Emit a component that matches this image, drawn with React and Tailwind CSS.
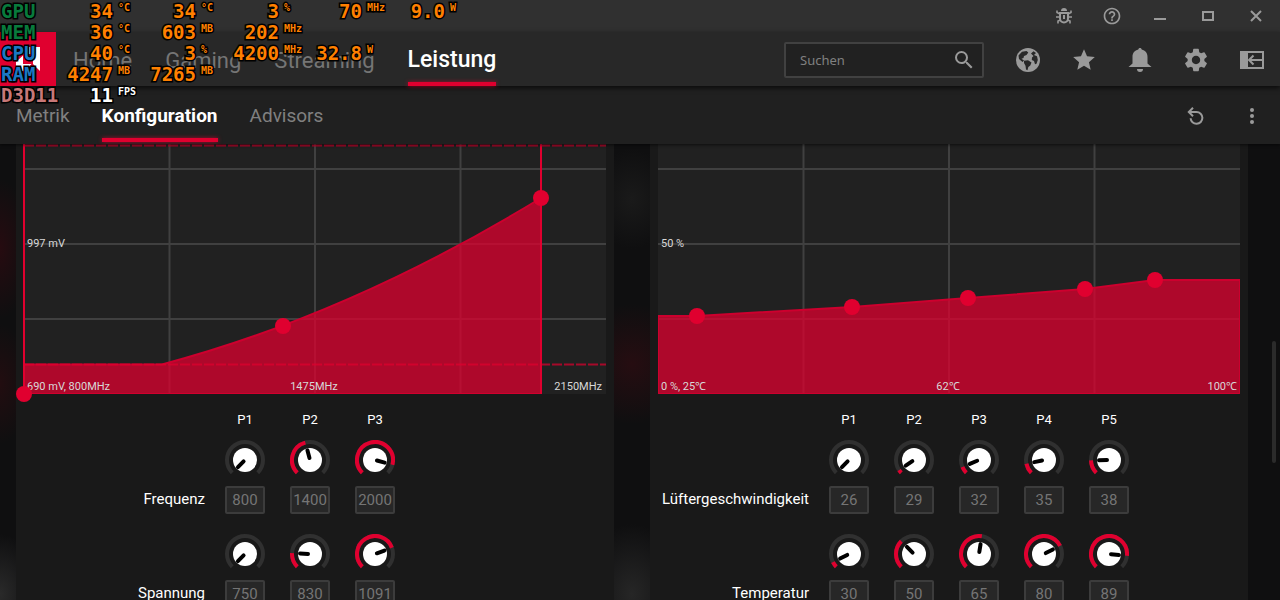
import React, { useState } from 'react';
import clsx from 'clsx';
import { MdHelpOutline, MdSearch, MdSettings, MdStar } from 'react-icons/md';

const mainTabs = ['Home', 'Gaming', 'Streaming', 'Leistung'];
const subTabs = ['Metrik', 'Konfiguration', 'Advisors'];

const overlayRows = [
  { name: 'GPU', color: 'text-[#087a3c]', cells: [['34', '°C'], ['34', '°C'], ['3', '%'], ['70', 'MHz'], ['9.0', 'W']] },
  { name: 'MEM', color: 'text-[#087a3c]', cells: [['36', '°C'], ['603', 'MB'], ['202', 'MHz']] },
  { name: 'CPU', color: 'text-[#1b78c4]', cells: [['40', '°C'], ['3', '%'], ['4200', 'MHz'], ['32.8', 'W']] },
  { name: 'RAM', color: 'text-[#1b78c4]', cells: [['4247', 'MB'], ['7265', 'MB']] },
  { name: 'D3D11', color: 'text-[#c87878]', white: true, cells: [['11', 'FPS']] },
];

const gpuRows = [
  { label: 'Frequenz', min: 800, max: 2150, values: [800, 1400, 2000] },
  { label: 'Spannung', min: 750, max: 1200, values: [750, 830, 1091] },
];

const fanRows = [
  { label: 'Lüftergeschwindigkeit', min: 26, max: 100, values: [26, 29, 32, 35, 38] },
  { label: 'Temperatur', min: 25, max: 100, values: [30, 50, 65, 80, 89] },
];

function BugIcon() {
  return (
    <svg width="16" height="16" viewBox="0 0 16 16" fill="none" stroke="currentColor" strokeWidth="2">
      <path d="M5 3a3 3 0 0 1 6 0z" fill="currentColor" stroke="none" />
      <path d="M4 5h8v5.500a4 4 0 0 1-8 0z" />
      <path d="M8 7v4" strokeWidth="2" />
      <path d="M4 6 1 4.500V2.500M12 6l3-1.500V2.500M4 9H0M12 9h4M4.500 12 2 13v2.500M11.500 12l2.500 1v2.500" strokeWidth="1.600" />
    </svg>
  );
}

function GlobeIcon() {
  return (
    <svg width="24" height="24" viewBox="0 0 24 24">
      <circle cx="12" cy="12" r="12" fill="currentColor" />
      <g fill="#282828">
        <path d="M2.500 7.500 6 3.800 10.500 3l1.800 1.500L10.500 7 8 8l-.5 2-2 .8 2.500 1.700L6.500 14 3 11z" />
        <path d="M8 12.800l4-.6 3.500 2.300-1.200 3-2 1.500-.8 3.200-1.500-.6-.5-3.800L8 15z" />
        <path d="M15 5.500l2.500-2.300L20 5l-2 2 3 1.200.8 3.800-1.300 3.800-1.500.4-1-3.200-2.200-1L16 9.500l1.500-1.500z" />
      </g>
    </svg>
  );
}

function BellIcon() {
  return (
    <svg width="24" height="24" viewBox="0 0 24 24" fill="currentColor">
      <path d="M12 0c1 0 1.600.6 1.700 1.600C17.300 2.400 19.500 5.200 19.500 9v6.500L23.500 19H.5l4-3.500V9c0-3.800 2.200-6.600 5.800-7.400C10.400.6 11 0 12 0z" />
      <path d="M9 21h6a3 3 0 0 1-6 0z" />
    </svg>
  );
}

function SidebarIcon() {
  return (
    <svg width="24" height="18" viewBox="0 0 24 18" fill="none" stroke="currentColor" strokeWidth="2">
      <path d="M0 0h8v18H0z" fill="currentColor" stroke="none" />
      <path d="M7 1h16v16H7M9.500 9H22M13.500 4.500 9 9l4.500 4.500" />
    </svg>
  );
}

function ResetIcon() {
  return (
    <svg width="18" height="18" viewBox="0 0 18 18" fill="none" stroke="currentColor" strokeWidth="2">
      <path d="M2 5h7.500a5.900 5.900 0 1 1-5.900 6.200" />
      <path d="M6 .8 1.800 5 6 9.200" />
    </svg>
  );
}

function Overlay() {
  return (
    <div className="pointer-events-none absolute left-0 top-0 z-50 pl-px pt-px font-['DejaVu_Sans_Mono',monospace] font-bold [-webkit-text-stroke:3px_#000] [paint-order:stroke_fill]">
      {overlayRows.map((row) => (
        <div key={row.name} className="flex h-[21px] items-center whitespace-nowrap text-[19px] leading-[21px]">
          <span className={clsx('w-[54px]', row.color)}>{row.name}</span>
          {row.cells.map(([value, unit], i) => (
            <span key={i} className={clsx('flex', row.white ? 'text-white' : 'text-[#ff8000]')}>
              <span className="flex w-[58px] justify-end">{value}</span>
              <span className="w-[25px] pl-[5px] text-[10px] leading-[14px]">{unit}</span>
            </span>
          ))}
        </div>
      ))}
    </div>
  );
}

function TitleBar() {
  return (
    <div className="flex h-8 justify-end bg-[#303030] text-[#9a9a9a]">
      <button aria-label="Fehler melden" className="flex w-12 items-center justify-center hover:text-white">
        <BugIcon />
      </button>
      <button aria-label="Hilfe" className="flex w-12 items-center justify-center hover:text-white">
        <MdHelpOutline size={20} />
      </button>
      <button aria-label="Minimieren" className="flex w-12 items-center justify-center hover:text-white">
        <svg width="12" height="10" stroke="currentColor" strokeWidth="2"><path d="M0 8h12" /></svg>
      </button>
      <button aria-label="Maximieren" className="flex w-12 items-center justify-center hover:text-white">
        <svg width="12" height="10" fill="none" stroke="currentColor" strokeWidth="2"><path d="M1 1h10v8H1z" /></svg>
      </button>
      <button aria-label="Schließen" className="flex w-12 items-center justify-center hover:text-white">
        <svg width="12" height="12" stroke="currentColor" strokeWidth="2"><path d="m1 1 10 10M11 1 1 11" /></svg>
      </button>
    </div>
  );
}

function NavBar() {
  const [active, setActive] = useState('Leistung');

  return (
    <header className="relative z-20 flex h-[54px] bg-[#282828] shadow-[0_2px_5px_rgba(0,0,0,0.7)]">
      <a href="#home" aria-label="Startseite" className="flex w-14 items-center justify-center bg-[#e0002f] text-white">
        <svg width="24" height="24" viewBox="0 0 24 24" fill="currentColor">
          <path d="M0 0h24v24l-7-7V7H7z" />
          <path d="M7 8.500v8.500h8.500L9 24H0v-9z" />
        </svg>
      </a>
      <nav className="ml-[17px] flex gap-[33px]">
        {mainTabs.map((tab) => (
          <a
            key={tab}
            href={'#' + tab.toLowerCase()}
            onClick={() => setActive(tab)}
            className={clsx('relative flex items-center pt-0.5', tab === active ? 'text-[23px] font-medium text-white' : 'text-[22px] text-[#757575]')}
          >
            {tab}
            {tab === active && <span className="absolute inset-x-0 bottom-0 h-1 bg-[#e0002f] shadow-[0_0_4px_rgba(224,0,47,0.7)]" />}
          </a>
        ))}
      </nav>
      <div className="ml-auto flex items-center pt-0.5 text-[#9a9a9a]">
        <label className="mr-4 flex h-9 w-[200px] items-center rounded-xs border-2 border-[#414141] bg-[#212121] pl-[14px] pr-[6px]">
          <input
            type="text"
            aria-label="Suchen"
            placeholder="Suchen"
            className="min-w-0 flex-1 bg-transparent pt-px font-['Noto_Sans',sans-serif] text-[13px] outline-none placeholder:text-[#808080]"
          />
          <MdSearch size={24} />
        </label>
        <button aria-label="Web" className="flex h-full w-14 items-center justify-center hover:text-white">
          <GlobeIcon />
        </button>
        <button aria-label="Favoriten" className="flex h-full w-14 items-center justify-center hover:text-white">
          <MdStar size={26} />
        </button>
        <button aria-label="Benachrichtigungen" className="flex h-full w-14 items-center justify-center hover:text-white">
          <BellIcon />
        </button>
        <button aria-label="Einstellungen" className="flex h-full w-14 items-center justify-center hover:text-white">
          <MdSettings size={28} />
        </button>
        <button aria-label="Seitenleiste" className="flex h-full w-14 items-center justify-center hover:text-white">
          <SidebarIcon />
        </button>
      </div>
    </header>
  );
}

function SubNav() {
  const [active, setActive] = useState('Konfiguration');

  return (
    <div className="relative z-10 flex h-[58px] bg-[#202020] shadow-[0_1px_3px_rgba(0,0,0,0.6)]">
      <nav className="ml-4 flex gap-8 text-[19px]">
        {subTabs.map((tab) => (
          <a
            key={tab}
            href={'#' + tab.toLowerCase()}
            onClick={() => setActive(tab)}
            className={clsx('relative flex items-center pt-0.5', tab === active ? 'font-bold text-white' : 'text-[#808080]')}
          >
            {tab}
            {tab === active && <span className="absolute inset-x-0 bottom-0.5 h-1 bg-[#e0002f] shadow-[0_0_4px_rgba(224,0,47,0.7)]" />}
          </a>
        ))}
      </nav>
      <div className="ml-auto flex pt-0.5 text-[#9a9a9a]">
        <button aria-label="Zurücksetzen" className="flex w-14 items-center justify-center hover:text-white">
          <ResetIcon />
        </button>
        <button aria-label="Mehr" className="flex w-14 items-center justify-center hover:text-white">
          <svg width="4" height="18" viewBox="0 0 4 18" fill="currentColor">
            <circle cx="2" cy="3" r="2" />
            <circle cx="2" cy="9" r="2" />
            <circle cx="2" cy="15" r="2" />
          </svg>
        </button>
      </div>
    </div>
  );
}

function Grid() {
  return (
    <>
      <rect width="582" height="250" fill="#212121" />
      <path d="M145.500 0v250M291 0v250M436.500 0v250M0 25h582M0 100h582M0 175h582" stroke="#404040" strokeWidth="2" />
    </>
  );
}

function VoltageChart() {
  return (
    <svg viewBox="0 0 582 250" className="block h-auto w-full overflow-visible">
      <Grid />
      <path d="M0 220.500H138Q327.500 170 517 54V250H0z" fill="#e0002f" fillOpacity="0.74" />
      <path d="M0 220.500H138Q327.500 170 517 54" fill="none" stroke="#cc002e" strokeWidth="2" />
      <path d="M0 1.500H582M0 220.500H582" stroke="#e0002f" strokeOpacity="0.7" strokeWidth="2" strokeDasharray="10 2" />
      <path d="M0 249.500H517" stroke="#d0002e" />
      <path d="M0 0V250M517 0V250" stroke="#e0002f" strokeWidth="2" />
      <g fill="#d8d8d8" fontSize="11">
        <text x="3" y="103">997 mV</text>
        <text x="3" y="246">690 mV, 800MHz</text>
        <text x="290" y="246" textAnchor="middle">1475MHz</text>
        <text x="578" y="246" textAnchor="end">2150MHz</text>
      </g>
      <g fill="#e0002f">
        <circle cx="0" cy="250" r="8" />
        <circle cx="259" cy="182" r="8" />
        <circle cx="517" cy="54" r="8" />
      </g>
    </svg>
  );
}

function FanChart() {
  const points = [[39, 172], [194, 163], [310, 154], [427, 145], [497, 136]];
  const line = 'M0 172L' + points.map((p) => p.join(' ')).join('L') + 'H582';

  return (
    <svg viewBox="0 0 582 250" className="block h-auto w-full overflow-visible">
      <Grid />
      <path d={line + 'V250H0z'} fill="#e0002f" fillOpacity="0.74" />
      <path d={line} fill="none" stroke="#cc002e" strokeWidth="2" />
      <path d="M0.500 172V249.500H581.500V136" fill="none" stroke="#cc002e" />
      <g fill="#d8d8d8" fontSize="11">
        <text x="3" y="103">50 %</text>
        <text x="3" y="246">0 %, 25℃</text>
        <text x="290" y="246" textAnchor="middle">62℃</text>
        <text x="579" y="246" textAnchor="end">100℃</text>
      </g>
      {points.map(([x, y]) => (
        <circle key={x} cx={x} cy={y} r="8" fill="#e0002f" />
      ))}
    </svg>
  );
}

// the dial sweeps 270 degrees, starting bottom left
function polar(frac, r) {
  const a = ((frac * 270 - 225) * Math.PI) / 180;
  return [20 + r * Math.cos(a), 20 + r * Math.sin(a)];
}

function arc(frac) {
  const [x0, y0] = polar(0, 18);
  const [x1, y1] = polar(frac, 18);
  return `M${x0} ${y0}A18 18 0 ${frac > 2 / 3 ? 1 : 0} 1 ${x1} ${y1}`;
}

function Knob({ label, min, max, value, onChange }) {
  const frac = (value - min) / (max - min);
  const [hx, hy] = polar(frac, 2);
  const [tx, ty] = polar(frac, 10);

  return (
    <div className="relative size-10">
      <svg viewBox="0 0 40 40" className="size-10" fill="none" strokeWidth="4">
        <path d={arc(1)} stroke="#303030" />
        {frac > 0 && <path d={arc(frac)} stroke="#e0002f" />}
        <circle cx="20" cy="20" r="12" fill="#fff" />
        <path d={`M${hx} ${hy}L${tx} ${ty}`} stroke="#000" strokeLinecap="round" />
      </svg>
      <input
        type="range"
        aria-label={label}
        min={min}
        max={max}
        value={value}
        onChange={(e) => onChange(Number(e.target.value))}
        className="absolute inset-0 size-full cursor-pointer opacity-0"
      />
    </div>
  );
}

function ControlRow({ row, labelClass }) {
  const [values, setValues] = useState(row.values);
  const update = (i, v) => setValues(values.map((old, j) => (j === i ? v : old)));

  return (
    <div className="flex items-end gap-5">
      <label htmlFor={row.label + '-0'} className={clsx('shrink-0 whitespace-nowrap pb-[3px] text-right leading-6', labelClass)}>
        {row.label}
      </label>
      <div className="flex gap-[25px]">
        {values.map((value, i) => (
          <div key={i} className="flex flex-col gap-1.5">
            <Knob label={`${row.label} Regler P${i + 1}`} min={row.min} max={row.max} value={value} onChange={(v) => update(i, v)} />
            <input
              id={row.label + '-' + i}
              type="text"
              aria-label={i > 0 ? `${row.label} P${i + 1}` : undefined}
              value={value}
              onChange={(e) => update(i, Number(e.target.value) || 0)}
              className="h-7 w-10 rounded-xs border-2 border-[#3c3c3c] bg-[#272727] text-center text-[#757575] outline-none"
            />
          </div>
        ))}
      </div>
    </div>
  );
}

function Panel({ chart, rows, labelClass }) {
  return (
    <section className="min-w-0 flex-1 bg-[#191919] px-2">
      {chart}
      <div className="flex gap-5 pb-2.5 pt-4 text-[13px] leading-5 text-white">
        <span className={clsx('shrink-0', labelClass)} />
        <div className="flex gap-[25px]">
          {rows[0].values.map((_, i) => (
            <span key={i} className="w-10 text-center">P{i + 1}</span>
          ))}
        </div>
      </div>
      <div className="flex flex-col gap-5 text-[15px] text-white">
        {rows.map((row) => (
          <ControlRow key={row.label} row={row} labelClass={labelClass} />
        ))}
      </div>
    </section>
  );
}

export default function App() {
  return (
    <div className="relative flex h-screen flex-col overflow-hidden bg-[#0f0f10] font-[Roboto,sans-serif]">
      <TitleBar />
      <NavBar />
      <SubNav />
      <main className="relative flex min-h-0 flex-1 gap-9 overflow-hidden bg-[radial-gradient(40px_50px_at_632px_55px,#1a1a1a,transparent),radial-gradient(60px_60px_at_632px_220px,#260d11,transparent),radial-gradient(30px_70px_at_0px_105px,#260b10,transparent),radial-gradient(30px_60px_at_0px_240px,#220d10,transparent),radial-gradient(40px_60px_at_0px_450px,#2a2a2a,transparent),radial-gradient(50px_70px_at_632px_450px,#262626,transparent)] pl-4 pr-8">
        <Panel chart={<VoltageChart />} rows={gpuRows} labelClass="w-[181px]" />
        <Panel chart={<FanChart />} rows={fanRows} labelClass="w-[151px]" />
        <div className="absolute right-1 top-[197px] h-[122px] w-1 rounded-full bg-[#2b2b2b]" />
      </main>
      <Overlay />
    </div>
  );
}
